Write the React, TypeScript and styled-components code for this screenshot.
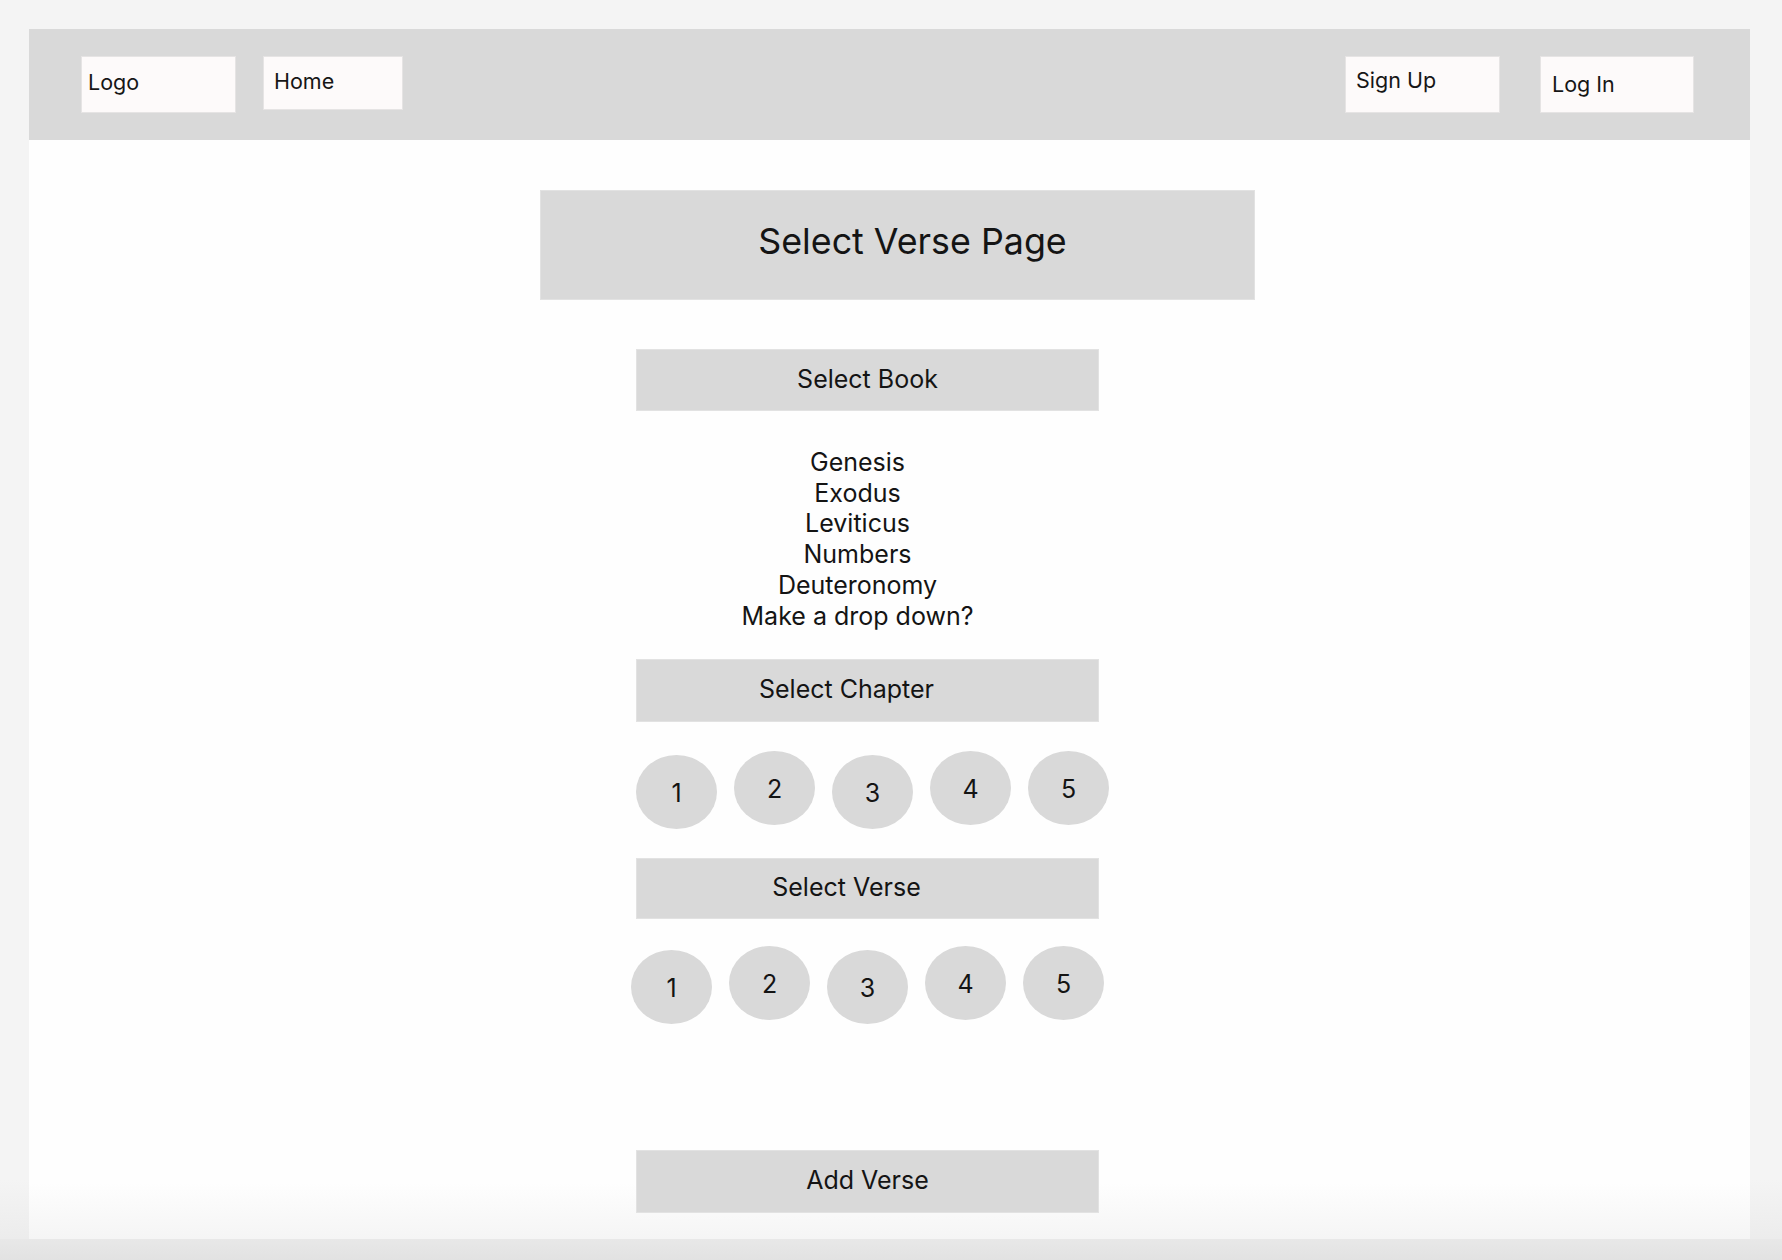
import React from "react";
import styled, { createGlobalStyle } from "styled-components";

const GlobalStyle = createGlobalStyle`
  html, body {
    margin: 0;
    padding: 0;
  }
  body {
    font-family: Inter, "Noto Sans", "Liberation Sans", sans-serif;
    color: #141414;
    background: linear-gradient(
      to bottom,
      #f4f4f4 0px,
      #f4f4f4 1180px,
      #ececec 1239px,
      #e8e8e8 1239px,
      #e2e2e2 1260px
    );
    background-repeat: no-repeat;
    min-height: 1260px;
  }
`;

const Page = styled.div`
  width: 1782px;
  height: 1260px;
  box-sizing: border-box;
  padding: 29px 32px 0 29px;
  overflow: hidden;
`;

const Frame = styled.div`
  width: 1721px;
  height: 1210px;
  display: flex;
  flex-direction: column;
  background: linear-gradient(to bottom, #fefefe 0, #fefefe calc(100% - 56px), #f5f5f5 100%);
`;

const Header = styled.header`
  height: 111px;
  box-sizing: border-box;
  background: #d9d9d9;
  display: flex;
  align-items: flex-start;
  padding: 27px 56px 0 52px;
  gap: 27px;
  flex-shrink: 0;
`;

const NavGroup = styled.div`
  display: flex;
  gap: 40px;
  margin-left: auto;
`;

const NavBox = styled.div<{ $w: number; $h: number; $pl: number; $shift: number }>`
  width: ${(p) => p.$w}px;
  height: ${(p) => p.$h}px;
  box-sizing: border-box;
  background: #fdfafa;
  border: 1px solid #e6e4e4;
  display: flex;
  align-items: center;
  padding-left: ${(p) => p.$pl}px;
  padding-bottom: ${(p) => p.$shift}px;
  font-size: 21.5px;
  color: #161616;
`;

const Main = styled.main`
  display: flex;
  flex-direction: column;
  align-items: flex-start;
  padding: 50px 0 0 511px;
`;

const TitleBox = styled.div`
  width: 715px;
  height: 110px;
  box-sizing: border-box;
  background: #d9d9d9;
  border: 1px solid #e2e2e2;
  display: flex;
  align-items: center;
  justify-content: center;
  padding-left: 30px;
  padding-bottom: 8px;
  font-size: 35.8px;
  color: #141414;
`;

const Panel = styled.div`
  margin-left: 96px;
  margin-top: 49px;
  width: 473px;
  display: flex;
  flex-direction: column;
  align-items: flex-start;
`;

const SectionBar = styled.div<{ $mt: number; $h: number; $offset: number }>`
  margin-top: ${(p) => p.$mt}px;
  width: 463px;
  height: ${(p) => p.$h}px;
  box-sizing: border-box;
  background: #d9d9d9;
  border: 1px solid #e2e2e2;
  display: flex;
  align-items: center;
  justify-content: center;
  padding-right: ${(p) => p.$offset}px;
  padding-bottom: 3px;
  font-size: 25px;
  color: #141414;
`;

const BookList = styled.ul`
  list-style: none;
  margin: 36px 0 0 0;
  padding: 0 20px 0 0;
  width: 463px;
  box-sizing: border-box;
  text-align: center;
  font-size: 25px;
  line-height: 30.7px;
  color: #141414;
`;

const CircleRow = styled.div<{ $mt: number; $ml: number }>`
  margin-top: ${(p) => p.$mt}px;
  margin-left: ${(p) => p.$ml}px;
  display: flex;
  align-items: flex-start;
  gap: 17px;
  height: 78px;
`;

const Circle = styled.div<{ $drop: boolean }>`
  width: 81px;
  height: 74px;
  box-sizing: border-box;
  padding-top: 2px;
  margin-top: ${(p) => (p.$drop ? 4 : 0)}px;
  border-radius: 50%;
  background: #d9d9d9;
  display: flex;
  align-items: center;
  justify-content: center;
  font-size: 25px;
  color: #141414;
`;

const books = ["Genesis", "Exodus", "Leviticus", "Numbers", "Deuteronomy", "Make a drop down?"];
const nums = [1, 2, 3, 4, 5];

export default function App() {
  return (
    <>
      <GlobalStyle />
      <Page>
        <Frame>
          <Header>
            <NavBox $w={155} $h={57} $pl={6} $shift={5}>Logo</NavBox>
            <NavBox $w={140} $h={54} $pl={10} $shift={4}>Home</NavBox>
            <NavGroup>
              <NavBox $w={155} $h={57} $pl={10} $shift={9}>Sign Up</NavBox>
              <NavBox $w={154} $h={57} $pl={11} $shift={1}>Log In</NavBox>
            </NavGroup>
          </Header>
          <Main>
            <TitleBox>Select Verse Page</TitleBox>
            <Panel>
              <SectionBar $mt={0} $h={62} $offset={0}>Select Book</SectionBar>
              <BookList>
                {books.map((b) => (
                  <li key={b}>{b}</li>
                ))}
              </BookList>
              <SectionBar $mt={28} $h={63} $offset={42}>Select Chapter</SectionBar>
              <CircleRow $mt={29} $ml={0}>
                {nums.map((n) => (
                  <Circle key={n} $drop={n === 1 || n === 3}>{n}</Circle>
                ))}
              </CircleRow>
              <SectionBar $mt={29} $h={61} $offset={42}>Select Verse</SectionBar>
              <CircleRow $mt={27} $ml={-5}>
                {nums.map((n) => (
                  <Circle key={n} $drop={n === 1 || n === 3}>{n}</Circle>
                ))}
              </CircleRow>
              <SectionBar $mt={126} $h={63} $offset={0}>Add Verse</SectionBar>
            </Panel>
          </Main>
        </Frame>
      </Page>
    </>
  );
}
